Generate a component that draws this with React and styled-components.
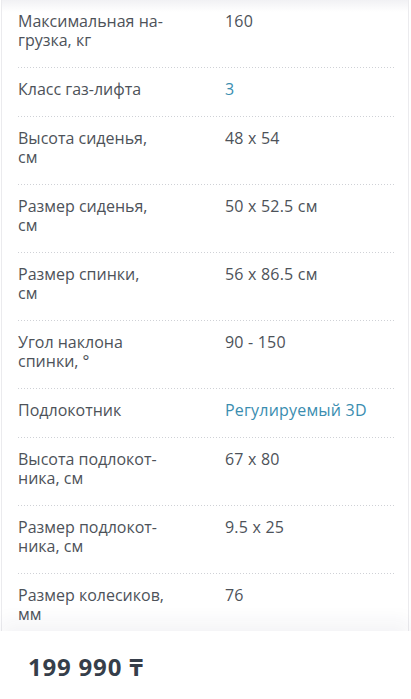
import styled, { createGlobalStyle } from "styled-components";

const GlobalStyle = createGlobalStyle`
  html, body {
    margin: 0;
    padding: 0;
    background: #ffffff;
  }
  body {
    font-family: "Open Sans", "Noto Sans", sans-serif;
    -webkit-font-smoothing: antialiased;
  }
`;

const Page = styled.div`
  height: 100vh;
  display: flex;
  flex-direction: column;
  overflow: hidden;
`;

const Card = styled.div`
  flex: 1;
  min-height: 0;
  overflow: hidden;
  margin: 0 2px 0 1px;
  border-left: 1px solid #ebebee;
  border-right: 1px solid #ebebee;
  padding: 0 14px 0 16px;
  background: linear-gradient(#f1f1f4 0px, #ffffff 12px);
`;

const Row = styled.div`
  display: grid;
  grid-template-columns: 207px 1fr;
  padding: 12px 0 18px;
  background-image: linear-gradient(to right, #cfd1d6 1px, transparent 1px);
  background-size: 3px 1px;
  background-repeat: repeat-x;
  background-position: left bottom;
  font-size: 16px;
  line-height: 19px;
`;

const Label = styled.div`
  color: #4d5259;
`;

const Value = styled.div`
  color: ${(p) => (p.$link ? "#3a8db0" : "#4d5259")};
  letter-spacing: 0.2px;
`;

const BottomBar = styled.div`
  flex: none;
  height: 68px;
  display: flex;
  align-items: center;
  padding: 0 28px;
  background: #ffffff;
  box-shadow: 0 -10px 18px rgba(40, 45, 70, 0.05);
  position: relative;
`;

const Price = styled.div`
  font-size: 24px;
  font-weight: 700;
  color: #363e4a;
  letter-spacing: 0.8px;
  padding-top: 2px;
`;

const specs = [
  { label: ["Максимальная на-", "грузка, кг"], value: "160" },
  { label: ["Класс газ-лифта"], value: "3", link: true },
  { label: ["Высота сиденья,", "см"], value: "48 x 54" },
  { label: ["Размер сиденья,", "см"], value: "50 x 52.5 см" },
  { label: ["Размер спинки,", "см"], value: "56 x 86.5 см" },
  { label: ["Угол наклона", "спинки, °"], value: "90 - 150" },
  { label: ["Подлокотник"], value: "Регулируемый 3D", link: true },
  { label: ["Высота подлокот-", "ника, см"], value: "67 x 80" },
  { label: ["Размер подлокот-", "ника, см"], value: "9.5 x 25" },
  { label: ["Размер колесиков,", "мм"], value: "76" },
];

export default function App() {
  return (
    <Page>
      <GlobalStyle />
      <Card>
        {specs.map((s, i) => (
          <Row key={i}>
            <Label>
              {s.label.map((line, j) => (
                <div key={j}>{line}</div>
              ))}
            </Label>
            <Value $link={s.link}>{s.value}</Value>
          </Row>
        ))}
      </Card>
      <BottomBar>
        <Price>199 990 ₸</Price>
      </BottomBar>
    </Page>
  );
}
